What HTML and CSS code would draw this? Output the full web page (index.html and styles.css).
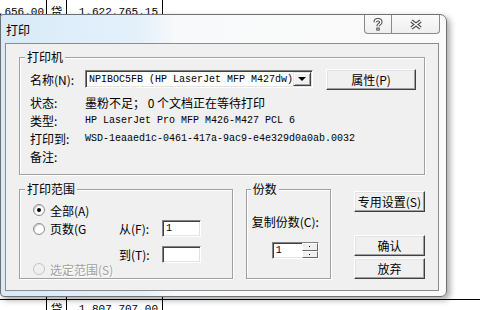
FILE: index.html
```html
<!DOCTYPE html>
<html lang="zh-CN">
<head>
    <meta charset="UTF-8">
    <meta name="viewport" content="width=device-width, initial-scale=1.0">
    <title>打印</title>
    <link rel="stylesheet" href="styles.css">
</head>
<body>
    <div class="sheet">
        <div class="sheet-row top">
            <div class="cell amt">1,656.00</div>
            <div class="cell dir">贷</div>
            <div class="cell bal">1,622,765.15</div>
        </div>
        <div class="sheet-bottom">
            <div class="sheet-row gap">
                <div class="cell amt"></div>
                <div class="cell dir"></div>
                <div class="cell bal"></div>
            </div>
            <div class="sheet-row last">
                <div class="cell amt"></div>
                <div class="cell dir">贷</div>
                <div class="cell bal">1,807,707.00</div>
            </div>
        </div>
    </div>

    <div class="window">
        <div class="titlebar">
            <span class="title">打印</span>
            <div class="caption">
                <button class="cap help" title="帮助">
                    <svg width="10" height="13" viewBox="0 0 10 13">
                        <path d="M2.2 4.2 C2.2 1 7.8 1 7.8 4.2 C7.8 6.2 5 6.2 5 8.3" fill="none" stroke="#4a4a4a" stroke-width="3.4"/>
                        <path d="M2.2 4.2 C2.2 1 7.8 1 7.8 4.2 C7.8 6.2 5 6.2 5 8.3" fill="none" stroke="#fff" stroke-width="1.4"/>
                        <rect x="3.3" y="9.6" width="3.4" height="3" fill="#4a4a4a"/>
                        <rect x="4.3" y="10.6" width="1.4" height="1" fill="#fff"/>
                    </svg>
                </button>
                <button class="cap close" title="关闭">
                    <svg width="14" height="11" viewBox="0 0 14 11">
                        <path d="M2.5 2 L11.5 9 M11.5 2 L2.5 9" stroke="#4a4a4a" stroke-width="3.6"/>
                        <path d="M2.5 2 L11.5 9 M11.5 2 L2.5 9" stroke="#fff" stroke-width="1.5"/>
                    </svg>
                </button>
            </div>
        </div>

        <div class="client">
            <fieldset class="group printer">
                <legend>打印机</legend>
                <div class="group-body">
                    <div class="name-row">
                        <span class="lbl name-lbl">名称(N):</span>
                        <div class="combo">
                            <span class="mono">NPIBOC5FB (HP LaserJet MFP M427dw)</span>
                            <span class="drop"><i class="arrow"></i></span>
                        </div>
                        <button class="btn props">属性(P)</button>
                    </div>
                    <div class="info">
                        <div class="row"><span class="lbl">状态:</span><span>墨粉不足； 0 个文档正在等待打印</span></div>
                        <div class="row"><span class="lbl">类型:</span><span class="mono">HP LaserJet Pro MFP M426-M427 PCL 6</span></div>
                        <div class="row"><span class="lbl">打印到:</span><span class="mono">WSD-1eaaed1c-0461-417a-9ac9-e4e329d0a0ab.0032</span></div>
                        <div class="row"><span class="lbl">备注:</span><span></span></div>
                    </div>
                </div>
            </fieldset>

            <div class="lower">
                <fieldset class="group range">
                    <legend>打印范围</legend>
                    <div class="group-body range-body">
                        <div class="rrow r1">
                            <span class="radio checked"></span><span>全部(A)</span>
                        </div>
                        <div class="rrow r2">
                            <span class="opt"><span class="radio"></span><span>页数(G</span></span>
                            <span class="page-lbl">从(F):</span>
                            <span class="field"><span class="mono">1</span></span>
                        </div>
                        <div class="rrow r3">
                            <span class="opt"></span>
                            <span class="page-lbl">到(T):</span>
                            <span class="field"></span>
                        </div>
                        <div class="rrow r4 disabled">
                            <span class="radio"></span><span>选定范围(S)</span>
                        </div>
                    </div>
                </fieldset>

                <fieldset class="group copies">
                    <legend>份数</legend>
                    <div class="group-body copies-body">
                        <div class="copies-lbl">复制份数(C):</div>
                        <div class="spin">
                            <span class="mono">1</span>
                            <span class="spin-btns">
                                <span class="spin-btn"><i class="up"></i></span>
                                <span class="spin-btn"><i class="down"></i></span>
                            </span>
                        </div>
                    </div>
                </fieldset>

                <div class="actions">
                    <button class="btn setup">专用设置(S)</button>
                    <button class="btn ok">确认</button>
                    <button class="btn cancel">放弃</button>
                </div>
            </div>
        </div>
    </div>
</body>
</html>
```

FILE: styles.css
```css
body {
    margin: 0;
    width: 480px;
    height: 310px;
    overflow: hidden;
    position: relative;
    background: #fff;
    font-family: "Noto Sans CJK SC", "Liberation Sans", sans-serif;
    font-size: 12px;
    color: #000;
}

/* 背后的表格 */
.sheet {
    height: 310px;
    display: flex;
    flex-direction: column;
    justify-content: space-between;
    font-family: "Liberation Mono", "Noto Sans CJK SC", monospace;
    font-size: 11px;
}
.sheet-row {
    display: flex;
}
.sheet-row.top {
    height: 16px;
}
.sheet-row.gap {
    height: 10px;
}
.sheet-row.last {
    height: 10px;
    border-top: 1px solid #000;
}
.cell {
    box-sizing: border-box;
    border-right: 1px solid #000;
    overflow: hidden;
    white-space: nowrap;
    text-align: right;
    line-height: 14px;
}
.top .cell {
    padding-top: 5px;
}
.last .cell {
    padding-top: 2px;
}
.cell.amt {
    width: 47px;
    padding-right: 2px;
    direction: rtl;
}
.cell.dir {
    width: 20px;
    text-align: center;
    font-family: "Noto Sans CJK SC", sans-serif;
    font-size: 12px;
}
.cell.bal {
    width: 96px;
    padding-right: 4px;
}

/* 对话框窗口 */
.window {
    position: absolute;
    left: 0;
    top: 14px;
    width: 447px;
    height: 283px;
    box-sizing: border-box;
    display: flex;
    flex-direction: column;
    padding: 0 7px 5px 4px;
    border: 1px solid #707070;
    border-radius: 3px 7px 6px 4px;
    background: linear-gradient(90deg, #d8eaf8 0, #e4f1fb 140px, #f8f9fa 175px, #fafafa 100%);
    box-shadow: 3px 3px 6px rgba(0, 0, 0, 0.35);
}
.titlebar {
    height: 28px;
    display: flex;
    justify-content: space-between;
    align-items: flex-start;
    margin-right: -1px;
}
.title {
    margin: 8px 0 0 1px;
    line-height: 14px;
}
.caption {
    display: flex;
}
.cap {
    height: 19px;
    padding: 0;
    display: flex;
    align-items: center;
    justify-content: center;
    border: 1px solid #8a8a8a;
    border-top: none;
    background: linear-gradient(#fbfbfb, #eeeeee);
}
.cap.help {
    width: 28px;
    border-radius: 0 0 0 4px;
}
.cap.close {
    width: 48px;
    border-left: none;
    border-radius: 0 0 4px 0;
}

.client {
    flex: 1;
    box-sizing: border-box;
    padding: 7px 13px 0 13px;
    border: 1px solid #8c8c8c;
    background: #f0f0f0;
}

/* 分组框 */
.group {
    margin: 0;
    padding: 0;
    min-width: 0;
    border: 1px solid #a0a0a0;
    box-shadow: inset 1px 1px 0 #fff, 1px 1px 0 #fff;
}
.group legend {
    margin-left: 5px;
    padding: 0 2px;
    line-height: 12px;
    background: #f0f0f0;
}
.group-body {
    box-sizing: border-box;
}

.printer .group-body {
    padding: 6px 0 8px 10px;
}
.name-row {
    height: 21px;
    display: flex;
    align-items: flex-start;
}
.lbl {
    width: 55px;
    flex-shrink: 0;
}
.name-lbl {
    margin-top: 2px;
    line-height: 17px;
}
.mono {
    font-family: "Liberation Mono", "DejaVu Sans Mono", monospace;
    font-size: 10px;
}
.combo {
    margin-top: 1px;
    width: 228px;
    height: 18px;
    box-sizing: border-box;
    display: flex;
    align-items: center;
    justify-content: space-between;
    padding: 0 1px 0 3px;
    background: #fff;
    border: 1px solid;
    border-color: #828282 #fff #fff #828282;
    box-shadow: inset 1px 1px 0 #404040, inset -1px -1px 0 #e3e3e3;
    white-space: nowrap;
}
.drop {
    width: 18px;
    height: 14px;
    box-sizing: border-box;
    display: flex;
    align-items: center;
    justify-content: center;
    background: #f0f0f0;
    border: 1px solid;
    border-color: #e3e3e3 #404040 #404040 #e3e3e3;
    box-shadow: inset 1px 1px 0 #fff, inset -1px -1px 0 #a0a0a0;
}
.arrow {
    border-left: 4px solid transparent;
    border-right: 4px solid transparent;
    border-top: 4px solid #000;
}

.btn {
    height: 21px;
    box-sizing: border-box;
    padding: 0;
    font-family: inherit;
    font-size: 12px;
    color: #000;
    background: #f0f0f0;
    border: 1px solid;
    border-color: #fff #404040 #404040 #fff;
    box-shadow: inset -1px -1px 0 #a0a0a0, inset 1px 1px 0 #e3e3e3;
}
.btn.props {
    width: 90px;
    margin-left: 13px;
}

.info {
    margin-top: 4px;
}
.row {
    height: 18px;
    line-height: 18px;
    display: flex;
    white-space: nowrap;
}
.row .mono {
    line-height: 18px;
}

/* 下半部分 */
.lower {
    height: 96px;
    margin-top: 8px;
    display: flex;
}
.range {
    width: 214px;
}
.range-body {
    padding: 7px 0 0 13px;
}
.rrow {
    display: flex;
    align-items: center;
    white-space: nowrap;
}
.r1 {
    height: 16px;
}
.r2 {
    height: 17px;
    margin-top: 2px;
}
.r3 {
    height: 17px;
    margin-top: 9px;
}
.r4 {
    height: 14px;
    margin-top: -1px;
}
.opt {
    width: 86px;
    display: flex;
    align-items: center;
}
.page-lbl {
    width: 43px;
}
.radio {
    width: 12px;
    height: 12px;
    box-sizing: border-box;
    margin-right: 5px;
    border-radius: 50%;
    border: 1px solid #8d8d8d;
    background: #fff;
    box-shadow: inset 1px 1px 0 #cfcfcf;
    display: inline-flex;
    align-items: center;
    justify-content: center;
}
.radio.checked::after {
    content: "";
    width: 4px;
    height: 4px;
    border-radius: 50%;
    background: #000;
}
.disabled {
    color: #a0a0a0;
    text-shadow: 1px 1px 0 #fff;
}
.disabled .radio {
    border-color: #c4c4c4;
    background: #f0f0f0;
    box-shadow: none;
}
.field {
    width: 39px;
    height: 17px;
    box-sizing: border-box;
    padding-left: 3px;
    display: flex;
    align-items: center;
    background: #fff;
    border: 1px solid;
    border-color: #828282 #fff #fff #828282;
    box-shadow: inset 1px 1px 0 #404040, inset -1px -1px 0 #e3e3e3;
}

.copies {
    width: 84px;
    margin-left: 13px;
}
.copies legend {
    margin-left: 4px;
}
.copies-body {
    padding: 20px 0 0 5px;
}
.copies-lbl {
    line-height: 14px;
    white-space: nowrap;
}
.spin {
    width: 47px;
    height: 17px;
    margin: 13px 0 0 20px;
    box-sizing: border-box;
    display: flex;
    align-items: center;
    justify-content: space-between;
    padding-left: 3px;
    background: #fff;
    border: 1px solid;
    border-color: #828282 #fff #fff #828282;
    box-shadow: inset 1px 1px 0 #404040, inset -1px -1px 0 #e3e3e3;
}
.spin-btns {
    width: 16px;
    height: 15px;
    display: flex;
    flex-direction: column;
}
.spin-btn {
    flex: 1;
    box-sizing: border-box;
    display: flex;
    align-items: center;
    justify-content: center;
    background: #f0f0f0;
    border: 1px solid;
    border-color: #fff #696969 #696969 #fff;
}
.up, .down {
    width: 1px;
    height: 1px;
    background: #000;
}

.actions {
    width: 72px;
    margin-left: 23px;
    display: flex;
    flex-direction: column;
}
.btn.setup {
    margin-top: 8px;
}
.btn.ok {
    margin-top: 23px;
}
.btn.cancel {
    margin-top: 2px;
}
```
